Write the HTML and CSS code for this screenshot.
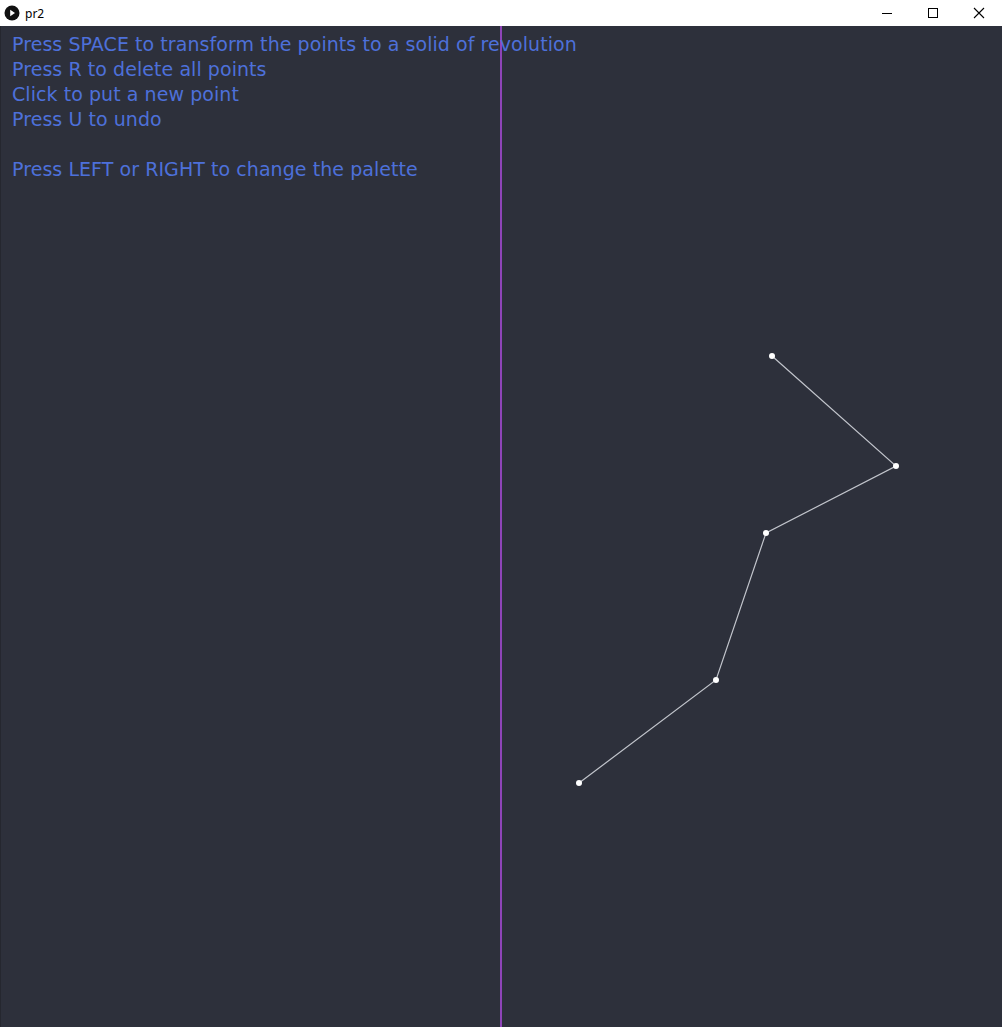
FILE: index.html
```html
<!DOCTYPE html>
<html>
<head>
<meta charset="utf-8">
<link rel="stylesheet" href="styles.css">
</head>
<body>
<div class="window">
  <div class="titlebar">
    <div class="app">
      <svg class="app-icon" width="16" height="16" viewBox="0 0 16 16">
        <circle cx="8" cy="8" r="7.5" fill="#111"/>
        <path d="M6.2 4.8 L11 8 L6.2 11.2 Z" fill="#fff"/>
      </svg>
      <span class="title">pr2</span>
    </div>
    <div class="controls">
      <div class="ctrl">
        <svg width="12" height="12" viewBox="0 0 12 12"><path d="M1 6.5 H11" stroke="#000" stroke-width="1"/></svg>
      </div>
      <div class="ctrl">
        <svg width="12" height="12" viewBox="0 0 12 12"><rect x="1.5" y="1.5" width="9" height="9" fill="none" stroke="#000" stroke-width="1"/></svg>
      </div>
      <div class="ctrl">
        <svg width="12" height="12" viewBox="0 0 12 12"><path d="M1 1 L11 11 M11 1 L1 11" stroke="#000" stroke-width="1.1"/></svg>
      </div>
    </div>
  </div>
  <div class="canvas">
    <svg class="drawing" width="1002" height="1001" viewBox="0 26 1002 1001">
      <line x1="501" y1="26" x2="501" y2="1027" stroke="#8e44b8" stroke-width="2"/>
      <polyline points="772,356 896,466 766,533 716,680 579,783" fill="none" stroke="#c2c5cc" stroke-width="1.2"/>
      <circle cx="772" cy="356" r="3" fill="#fff"/>
      <circle cx="896" cy="466" r="3" fill="#fff"/>
      <circle cx="766" cy="533" r="3" fill="#fff"/>
      <circle cx="716" cy="680" r="3" fill="#fff"/>
      <circle cx="579" cy="783" r="3" fill="#fff"/>
    </svg>
    <div class="help">
      <p>Press SPACE to transform the points to a solid of revolution</p>
      <p>Press R to delete all points</p>
      <p>Click to put a new point</p>
      <p>Press U to undo</p>
      <p class="gap">Press LEFT or RIGHT to change the palette</p>
    </div>
  </div>
</div>
</body>
</html>
```

FILE: styles.css
```css
html, body {
  margin: 0;
  padding: 0;
  background: #2d303b;
}
.window {
  width: 1002px;
  height: 1027px;
  display: flex;
  flex-direction: column;
  overflow: hidden;
}
.titlebar {
  height: 26px;
  background: #ffffff;
  display: flex;
  align-items: center;
  justify-content: space-between;
  flex-shrink: 0;
}
.app {
  display: flex;
  align-items: center;
  padding-left: 4px;
  gap: 5px;
}
.app-icon {
  display: block;
}
.title {
  font-family: "Noto Sans", "Liberation Sans", sans-serif;
  font-size: 12px;
  color: #000;
}
.controls {
  display: flex;
  height: 26px;
}
.ctrl {
  width: 46px;
  height: 26px;
  display: flex;
  align-items: center;
  justify-content: center;
}
.ctrl svg { display: block; }
.canvas {
  position: relative;
  flex: 1;
  background: #2d303b;
  border-left: 1px solid #25272f;
}
.drawing {
  position: absolute;
  left: -1px;
  top: 0;
}
.help {
  position: relative;
  padding: 6px 0 0 11px;
  font-family: "DejaVu Sans", sans-serif;
  font-size: 19px;
  letter-spacing: 0.06px;
  line-height: 25px;
  color: #4d70da;
}
.help p {
  margin: 0;
  white-space: nowrap;
}
.help .gap {
  margin-top: 25px;
}
```
